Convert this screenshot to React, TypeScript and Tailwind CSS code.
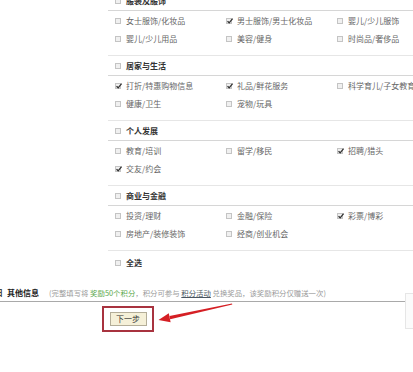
import React from "react";

type Item = { label: string; checked?: boolean };

function Box({ checked }: { checked?: boolean }) {
  return (
    <span className="relative inline-block w-[6px] h-[6px] shrink-0 border border-[#c4c4c4] bg-[#f0f0f0]">
      {checked && (
        <svg className="absolute left-[-1px] top-[-2px]" width="8" height="8" viewBox="0 0 8 8">
          <path d="M1.5 4.2 L3.2 5.8 L6.6 1.6" fill="none" stroke="#333" strokeWidth="1.3" />
        </svg>
      )}
    </span>
  );
}

function Row({ item }: { item: Item }) {
  return (
    <div className="h-[18px] flex items-center gap-[5px] text-[#666] whitespace-nowrap">
      <Box checked={item.checked} />
      <span>{item.label}</span>
    </div>
  );
}

function Section({ title, items }: { title: string; items: Item[] }) {
  return (
    <div className="border-b border-[#e6e6e6]">
      <div className="h-[20px] flex items-center gap-[5px] pl-[7px] border-b border-[#d6d6d6] font-bold text-[#333]">
        <Box />
        <span>{title}</span>
      </div>
      <div className="pt-[1px] pb-[7px] pl-[7px] grid grid-cols-[111px_111px_1fr]">
        {items.map((it, i) => (
          <Row key={i} item={it} />
        ))}
      </div>
    </div>
  );
}

const sections: { title: string; items: Item[] }[] = [
  {
    title: "服装及服饰",
    items: [
      { label: "女士服饰/化妆品" },
      { label: "男士服饰/男士化妆品", checked: true },
      { label: "婴儿/少儿服饰" },
      { label: "婴儿/少儿用品" },
      { label: "美容/健身" },
      { label: "时尚品/奢侈品" },
    ],
  },
  {
    title: "居家与生活",
    items: [
      { label: "打折/特惠购物信息", checked: true },
      { label: "礼品/鲜花服务", checked: true },
      { label: "科学育儿/子女教育" },
      { label: "健康/卫生" },
      { label: "宠物/玩具" },
    ],
  },
  {
    title: "个人发展",
    items: [
      { label: "教育/培训" },
      { label: "留学/移民" },
      { label: "招聘/猎头", checked: true },
      { label: "交友/约会", checked: true },
    ],
  },
  {
    title: "商业与金融",
    items: [
      { label: "投资/理财" },
      { label: "金融/保险" },
      { label: "彩票/博彩", checked: true },
      { label: "房地产/装修装饰" },
      { label: "经商/创业机会" },
    ],
  },
];

export default function App() {
  return (
    <div
      className="relative w-[413px] h-[372px] overflow-hidden bg-white text-[8px] leading-none"
      style={{ fontFamily: '"Noto Sans CJK SC", "Noto Sans", sans-serif' }}
    >
      <div className="ml-[108px] -mt-[9px]">
        {sections.map((s, i) => (
          <Section key={i} title={s.title} items={s.items} />
        ))}
        <div className="mt-[3px] h-[18px] pl-[7px] flex items-center gap-[5px] font-bold text-[#333]">
          <Box />
          <span>全选</span>
        </div>
      </div>

      <div className="mt-[12px] w-[407px] h-[18px] flex items-center border-b border-[#a9a9a9] whitespace-nowrap">
        <span className="-ml-[5px] w-[8px] font-bold text-[#444]">日</span>
        <span className="ml-[4px] font-bold text-[#222]">其他信息</span>
        <span className="ml-[10px] text-[7.4px] text-[#9a9a9a]">
          (完整填写将 <span className="text-[#5aa84a]">奖励50个积分</span>，积分可参与{" "}
          <span className="text-[#4a5560] underline">积分活动</span> 兑换奖品，该奖励积分仅赠送一次)
        </span>
      </div>

      <div className="mt-[4px] ml-[102px] w-[52px] h-[26px] border-2 border-[#a8333f] flex items-center justify-center">
        <div className="w-[37px] h-[14px] bg-[#f5f0d8] border border-[#b3ad98] flex items-center justify-center text-[8px] text-[#333]">
          下一步
        </div>
      </div>

      <svg className="absolute left-0 top-0 pointer-events-none" width="413" height="372" viewBox="0 0 413 372">
        <polygon points="232,303.4 232.3,304.6 170.2,319.2 169.5,316" fill="#d51f24" />
        <polygon points="158.5,320 170.6,322.2 168.8,313.2" fill="#d51f24" />
      </svg>

      <div className="absolute left-[405px] top-[293px] w-[12px] h-[36px] border border-[#e6e6e6] bg-[#fbfbfb]" />
    </div>
  );
}
